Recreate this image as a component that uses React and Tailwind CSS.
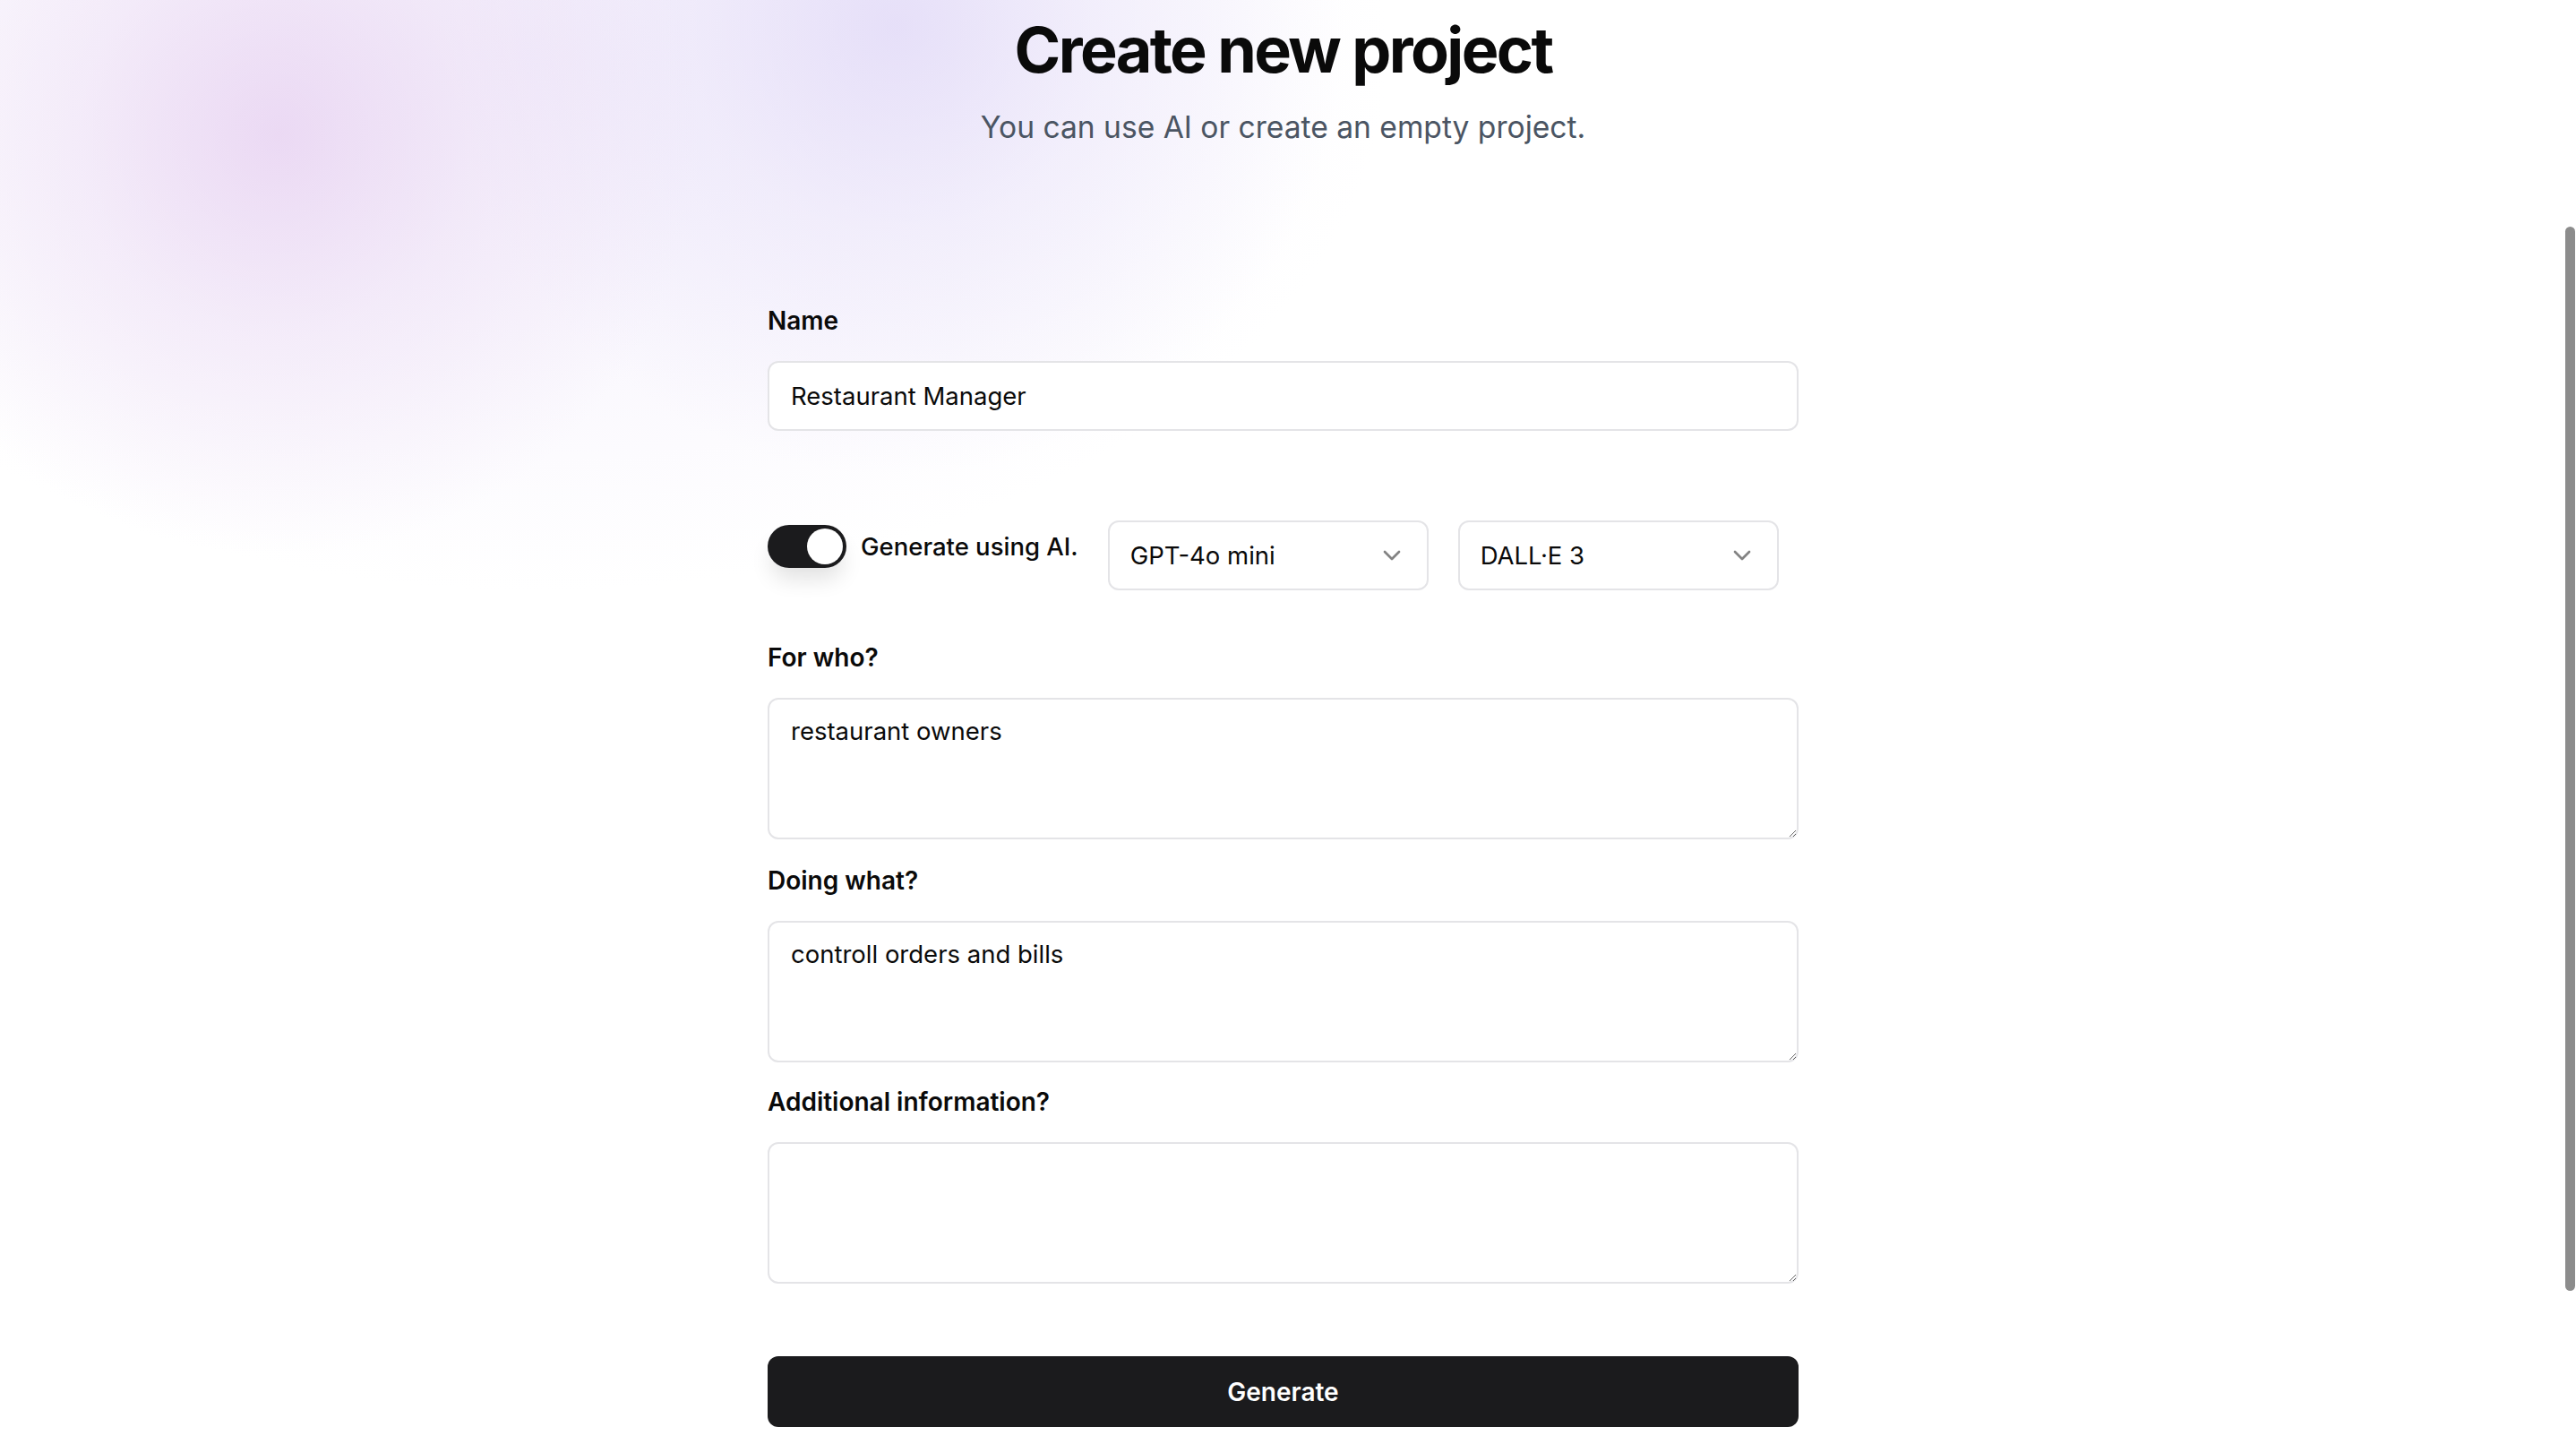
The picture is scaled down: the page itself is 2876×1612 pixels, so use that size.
import { ChevronDown } from "lucide-react";

function Label({ children, className = "" }) {
  return (
    <label
      className={`block text-[28px] leading-[28px] font-semibold text-[#0a0a0a] ${className}`}
    >
      {children}
    </label>
  );
}

function Select({ value }) {
  return (
    <button
      type="button"
      className="flex h-[78px] w-[358px] items-center justify-between rounded-[12px] border-2 border-[#e4e4e7] bg-white px-[23px] text-[27.5px] leading-[40px] text-[#0a0a0a]"
    >
      <span>{value}</span>
      <ChevronDown className="h-8 w-8 opacity-50" />
    </button>
  );
}

function TextArea({ value = "" }) {
  return (
    <textarea
      defaultValue={value}
      className="mt-[31px] block h-[158px] w-full rounded-[12px] border-2 border-[#e4e4e7] bg-white px-[24px] pt-[15px] text-[27.5px] leading-[40px] text-[#0a0a0a] outline-none"
    />
  );
}

export default function App() {
  return (
    <div className="relative h-[1612px] overflow-hidden bg-white font-[Inter,sans-serif] text-[#0a0a0a]">
      {/* soft colour wash top left */}
      <div className="pointer-events-none absolute inset-0 bg-[radial-gradient(circle_at_310px_150px,rgba(230,206,240,0.7)_0px,rgba(236,220,244,0.45)_220px,transparent_470px),radial-gradient(circle_at_1000px_30px,rgba(224,216,247,0.75)_0px,rgba(232,226,249,0.45)_230px,transparent_500px),radial-gradient(ellipse_950px_600px_at_600px_60px,rgba(242,237,251,0.9),transparent)]" />

      <div className="relative flex flex-col items-center pr-[11px]">
        <h1 className="mt-[16px] text-[70px] leading-[80px] font-bold tracking-[-0.037em]">
          Create new project
        </h1>
        <p className="mt-[22px] text-[33.6px] leading-[48px] text-[#4b5563]">
          You can use AI or create an empty project.
        </p>

        <form className="mt-[178px] w-[1151px]">
          <Label>Name</Label>
          <input
            defaultValue="Restaurant Manager"
            className="mt-[31px] block h-[78px] w-full rounded-[12px] border-2 border-[#e4e4e7] bg-white px-[24px] text-[27.5px] leading-[40px] outline-none"
          />

          <div className="mt-[100px] flex items-start gap-[33px]">
            <div className="mt-[5px] flex items-center gap-[16px]">
              <button
                type="button"
                className="flex h-[48px] w-[88px] items-center rounded-full bg-[#1b1b1d] p-[4px] shadow-[0_16px_24px_-4px_rgba(0,0,0,0.12)]"
              >
                <span className="ml-[40px] block h-[40px] w-[40px] rounded-full bg-white" />
              </button>
              <span className="text-[27.5px] leading-[28px] font-medium">
                Generate using AI.
              </span>
            </div>
            <Select value="GPT-4o mini" />
            <Select value="DALL·E 3" />
          </div>

          <Label className="mt-[61px]">For who?</Label>
          <TextArea value="restaurant owners" />

          <Label className="mt-[32px]">Doing what?</Label>
          <TextArea value="controll orders and bills" />

          <Label className="mt-[30px]">Additional information?</Label>
          <TextArea />

          <button
            type="button"
            className="mt-[81px] flex h-[79px] w-full items-center justify-center rounded-[12px] bg-[#1b1b1d] text-[28px] font-semibold text-white"
          >
            Generate
          </button>
        </form>
      </div>

      {/* overlay scrollbar */}
      <div className="absolute top-[253px] right-[1px] h-[1188px] w-[11px] rounded-full bg-[#8c8c8c]" />
    </div>
  );
}
